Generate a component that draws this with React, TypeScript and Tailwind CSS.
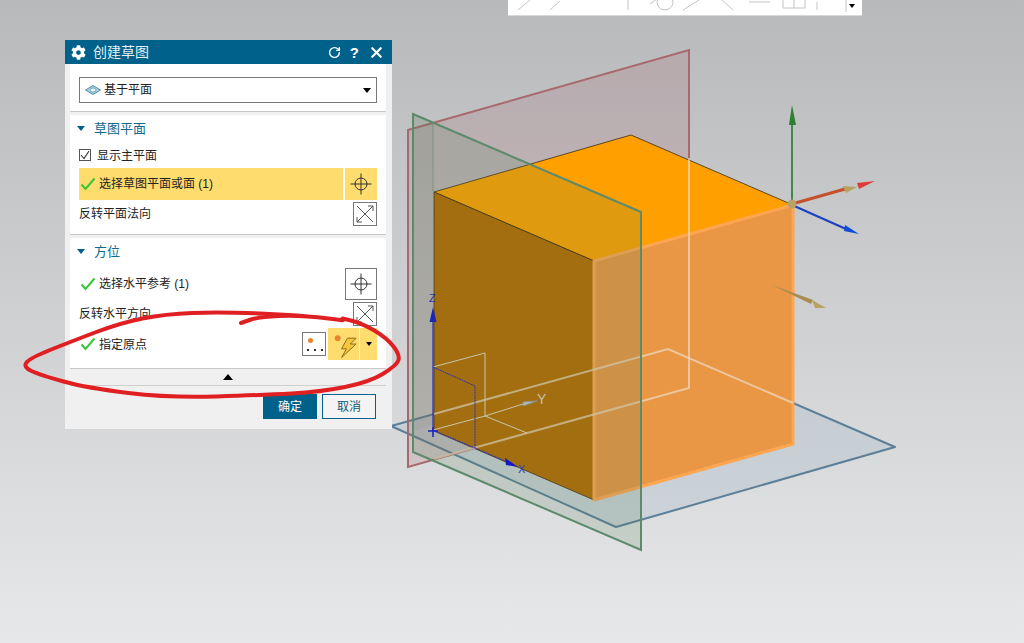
import React from 'react';
import { RotateCw, X } from 'lucide-react';
import { FaCog } from 'react-icons/fa';

const FONT = "font-['Liberation_Sans','Noto_Sans_CJK_SC',sans-serif]";

const Check = () => (
  <svg width="16" height="14" viewBox="0 0 16 14" className="shrink-0">
    <path d="M1.5 7.5 L5.5 12 L14.5 1.5" fill="none" stroke="#37c837" strokeWidth="2" />
  </svg>
);

const Target = () => (
  <svg width="22" height="22" viewBox="0 0 22 22">
    <circle cx="11" cy="11" r="6" fill="none" stroke="#333" strokeWidth="1" />
    <path d="M0.5 11 H21.5 M11 0.5 V21.5" stroke="#333" strokeWidth="1" />
  </svg>
);

const Flip = () => (
  <svg width="20" height="20" viewBox="0 0 20 20">
    <path d="M2 18 L18 2 M2 2 L18 18 M2 18 V13 M2 18 H7 M18 2 H13 M18 2 V7" fill="none" stroke="#555" strokeWidth="1" />
  </svg>
);

const SectionTitle: React.FC<{ title: string }> = ({ title }) => (
  <div className="flex items-center h-[26px] pt-[1px] -ml-[2px] gap-[9px]">
    <span className="w-0 h-0 border-x-4 border-x-transparent border-t-[5px] border-t-[#00608a]" />
    <span className="text-[13px] text-[#10688c]">{title}</span>
  </div>
);

const FlipRow: React.FC<{ label: string }> = ({ label }) => (
  <div className="flex items-center justify-between h-[26px] text-[12px] text-[#222]">
    <span>{label}</span>
    <span className="w-[24px] h-[24px] border border-[#777] bg-white flex items-center justify-center">
      <Flip />
    </span>
  </div>
);

const Dialog = () => (
  <div className={`absolute left-[65px] top-[40px] w-[327px] h-[389px] bg-[#f0f0f0] flex flex-col ${FONT}`}>
    <div className="h-[24px] bg-[#00618b] flex items-center pl-[6px] pr-[7px] text-white shrink-0">
      <FaCog size={15} />
      <span className="ml-[7px] pt-[1px] text-[14px] text-[#e8f2f6]">创建草图</span>
      <div className="ml-auto flex items-center gap-[9px]">
        <RotateCw size={13} strokeWidth={2.5} />
        <span className="text-[15px] font-bold leading-none">?</span>
        <X size={17} strokeWidth={3} />
      </div>
    </div>

    <div className="mx-[5px] w-[316px] flex flex-col">
      <div className="h-[48px] bg-white border-b border-[#c8c8c8] pl-[9px] pr-[9px] pt-[13px]">
        <div className="h-[26px] border border-[#777] flex items-center pl-[5px] pr-[5px] text-[12px] text-[#222]">
          <svg width="16" height="10" viewBox="0 0 16 10" className="mr-[3px]">
            <path d="M0.5 5 L8 0.5 L15.5 5 L8 9.5 Z" fill="#a9d4e4" stroke="#4f8ea6" strokeWidth="1" />
            <ellipse cx="8" cy="5" rx="3" ry="2" fill="#e9f5f9" stroke="#4f8ea6" strokeWidth="0.7" />
          </svg>
          <span>基于平面</span>
          <span className="ml-auto w-0 h-0 border-x-4 border-x-transparent border-t-[5px] border-t-black" />
        </div>
      </div>

      <div className="mt-[3px] h-[120px] bg-white border-b border-[#c8c8c8] pl-[9px] pr-[9px]">
        <SectionTitle title="草图平面" />
        <div className="flex items-center h-[27px] gap-[6px] text-[12px] text-[#222]">
          <span className="w-[12px] h-[12px] border border-[#555] flex items-center justify-center">
            <svg width="10" height="10" viewBox="0 0 10 10">
              <path d="M1 5 L4 8.5 L9 1" fill="none" stroke="#333" strokeWidth="1.1" />
            </svg>
          </span>
          <span className="pt-[2px]">显示主平面</span>
        </div>
        <div className="flex h-[32px] gap-[2px]">
          <div className="flex-1 bg-[#ffdc6e] flex items-center pl-[1px] gap-[3px] text-[12px] text-[#222]">
            <Check />
            <span>选择草图平面或面 (1)</span>
          </div>
          <div className="w-[32px] bg-[#ffdc6e] flex items-center justify-center">
            <Target />
          </div>
        </div>
        <div className="mt-[1px]">
          <FlipRow label="反转平面法向" />
        </div>
      </div>

      <div className="mt-[3px] h-[131px] bg-white border-b border-[#c8c8c8] pl-[9px] pr-[9px]">
        <SectionTitle title="方位" />
        <div className="flex items-center h-[32px] mt-[4px] text-[12px] text-[#222] gap-[3px] pl-[1px]">
          <Check />
          <span>选择水平参考 (1)</span>
          <span className="ml-auto w-[32px] h-[32px] border border-[#777] flex items-center justify-center">
            <Target />
          </span>
        </div>
        <div className="mt-[1px]">
          <FlipRow label="反转水平方向" />
        </div>
        <div className="flex items-center h-[32px] mt-[1px] text-[12px] text-[#222] gap-[3px] pl-[1px]">
          <Check />
          <span className="pt-[2px]">指定原点</span>
          <span className="ml-auto w-[24px] h-[24px] border border-[#777] relative">
            <span className="absolute left-[5px] top-[5px] w-[5px] h-[5px] rounded-full bg-[#e8852a]" />
            <span className="absolute left-[4px] top-[16px] text-[0px] flex gap-[5px]">
              <i className="w-[2px] h-[2px] bg-[#333]" />
              <i className="w-[2px] h-[2px] bg-[#333]" />
              <i className="w-[2px] h-[2px] bg-[#333]" />
            </span>
          </span>
          <span className="-ml-[1px] flex h-[32px] bg-[#ffdc6e]">
            <span className="w-[32px] border-r border-[#fff3c8] flex items-center justify-center">
              <svg width="32" height="32" viewBox="0 0 32 32">
                <circle cx="10" cy="10" r="3" fill="#e8852a" />
                <path d="M29 10 L20 10 L14 21 L19 21 L14 30 L29 16 L23 16 Z" fill="#f5c53a" stroke="#8a6a1c" strokeWidth="1" />
              </svg>
            </span>
            <span className="w-[17px] flex items-center justify-center">
              <span className="w-0 h-0 border-x-[3.5px] border-x-transparent border-t-[4px] border-t-black" />
            </span>
          </span>
        </div>
      </div>

      <div className="h-[17px] flex items-center justify-center border-b border-[#cfcfcf]">
        <span className="w-0 h-0 border-x-[5px] border-x-transparent border-b-[6px] border-b-black" />
      </div>

      <div className="flex justify-end gap-[5px] pt-[8px] pr-[10px]">
        <button className="w-[54px] h-[25px] bg-[#00618b] text-white text-[12px]">确定</button>
        <button className="w-[54px] h-[25px] bg-[#f4f4f4] border border-[#00618b] text-[#10587a] text-[12px]">取消</button>
      </div>
    </div>
  </div>
);

const Scene = () => (
  <svg width="1024" height="643" viewBox="0 0 1024 643" className="absolute inset-0">
    {/* horizontal datum */}
    <path d="M391 426 L668 349 L895 447 L616 527 Z" fill="#a9bccb" fillOpacity="0.35" stroke="#5c7f97" strokeWidth="2" strokeLinejoin="round" />
    {/* red datum */}
    <path d="M408 130 L689 50 L689 388 L408 467 Z" fill="#a05a66" fillOpacity="0.18" stroke="#a9686c" strokeWidth="2" />

    {/* block */}
    <path d="M434 192 L631 135 L793 205 L594 261 Z" fill="#ffa000" stroke="#3c2c10" strokeWidth="0.8" />
    <path d="M434 192 L594 261 L594 500 L434 431 Z" fill="#b56b00" stroke="#3c2c10" strokeWidth="0.8" />
    <path d="M594 261 L793 205 L793 444 L594 500 Z" fill="#e99745" stroke="#ffa652" strokeWidth="3" strokeLinejoin="round" />

    {/* datums seen through the block */}
    <path d="M689 158 V388 L434 459" fill="none" stroke="#f0d9c0" strokeOpacity="0.7" strokeWidth="2" />
    <path d="M434 414 L668 349 L793 403" fill="none" stroke="#ecdcc8" strokeOpacity="0.7" strokeWidth="2" />

    {/* strip left of the block */}
    <path d="M413 114 L433 123 V425 L413 431 Z" fill="#777" fillOpacity="0.08" />
    <path d="M433 123 V192" stroke="#8d958d" strokeWidth="1" />

    {/* wcs wire */}
    <path d="M433 367 L485 353 V416 L433 430 M485 416 L527 433 M485 416 L523 404" fill="none" stroke="#e4d6bd" strokeWidth="1" />
    <path d="M523 406 L537 401 L523 402 Z" fill="#c9c9c9" stroke="#999" strokeWidth="1" />
    <text x="537" y="404" fontSize="14" fill="#d9d2c0" fontFamily="Liberation Sans">Y</text>
    <path d="M433 367 L475 386 V448 M433 430 L505 461" fill="none" stroke="#2222cc" strokeWidth="1" strokeDasharray="2 0.6" />
    <path d="M433 320 V431" stroke="#1818dd" strokeWidth="1.2" />
    <path d="M429.5 322 L433 307 L436.5 322 Z" fill="#1111cc" />
    <path d="M428 431 H438 M433 427 V437" stroke="#1010dd" strokeWidth="1.6" />
    <path d="M505 458 L518 467 L506 465 Z" fill="#0000dd" />
    <text x="429" y="302" fontSize="11" fill="#2222bb" fontFamily="Liberation Sans">Z</text>
    <text x="518" y="473" fontSize="11" fill="#2233cc" fontFamily="Liberation Sans">X</text>

    {/* green datum on top */}
    <path d="M413 114 L641 212 V550 L413 452 Z" fill="#548254" fillOpacity="0.19" stroke="#5e8a6c" strokeWidth="2" />

    {/* triad */}
    <path d="M792 204 V125" stroke="#3f8a4a" strokeWidth="2" />
    <path d="M789 125 L792 105 L796 125 Z" fill="#2c7f33" />
    <path d="M792 204 L845 189" stroke="#c4502c" strokeWidth="3" />
    <path d="M857 183 L875 181 L859 189 Z" fill="#de3b3b" />
    <path d="M843 186 L857 187 L846 193 Z" fill="#b8a261" />
    <path d="M792 205 L846 229" stroke="#1a3fc0" strokeWidth="2" />
    <path d="M845 225 L859 234 L844 231 Z" fill="#1149d8" />
    <circle cx="792" cy="204" r="4.5" fill="#b9a268" />
    <path d="M772 285 L813 300 L811 304 Z" fill="#a98d4e" />
    <path d="M812 300 L826 308 L815 308 Z" fill="#b8a261" />
  </svg>
);

// freehand loop, points run through midpoint quadratics
const loop: [number, number][] = [
  [241, 323], [258, 317], [300, 315], [357, 322], [300, 315], [220, 312], [165, 314], [120, 323], [70, 342], [30, 358],
  [23, 367], [40, 375], [87, 388], [170, 398], [263, 395], [320, 392], [370, 382], [397, 365], [400, 355], [387, 338],
  [360, 322], [325, 315],
];

const loopPath = loop.reduce((d, p, i) => {
  if (i === 0) return `M${p[0]} ${p[1]}`;
  const prev = loop[i - 1];
  return `${d} Q${prev[0]} ${prev[1]} ${(prev[0] + p[0]) / 2} ${(prev[1] + p[1]) / 2}`;
}, '');

const Annotation = () => (
  <svg width="1024" height="643" viewBox="0 0 1024 643" className="absolute inset-0 pointer-events-none">
    <path d={loopPath} fill="none" stroke="#e01f22" strokeWidth="4" strokeLinecap="round" />
  </svg>
);

const Toolbar = () => (
  <div className="absolute left-[508px] top-0 w-[354px] h-[16px] bg-white border-b border-[#d8d8d8] overflow-hidden">
    <svg width="354" height="15" viewBox="0 0 354 15" className="absolute inset-0">
      <path d="M10 10 L22 0 M42 10 L52 1 M120 0 V10 M142 4 L150 -2 M175 10 L194 -2 M212 -2 L225 10 M241 2 H262 M275 0 V8 H297 V0 M286 0 V8 M309 2 V10 M338 0 V12" fill="none" stroke="#c4c4c4" strokeWidth="1" />
      <circle cx="157" cy="2" r="8" fill="none" stroke="#c4c4c4" strokeWidth="1" />
    </svg>
    <span className="absolute left-[341px] top-[4px] w-0 h-0 border-x-[3.5px] border-x-transparent border-t-[4px] border-t-black" />
  </div>
);

export default function App() {
  return (
    <div className="relative w-[1024px] h-[643px] overflow-hidden bg-gradient-to-b from-[#b7b9ba] to-[#e7e8ea]">
      <Scene />
      <Toolbar />
      <Dialog />
      <Annotation />
    </div>
  );
}
